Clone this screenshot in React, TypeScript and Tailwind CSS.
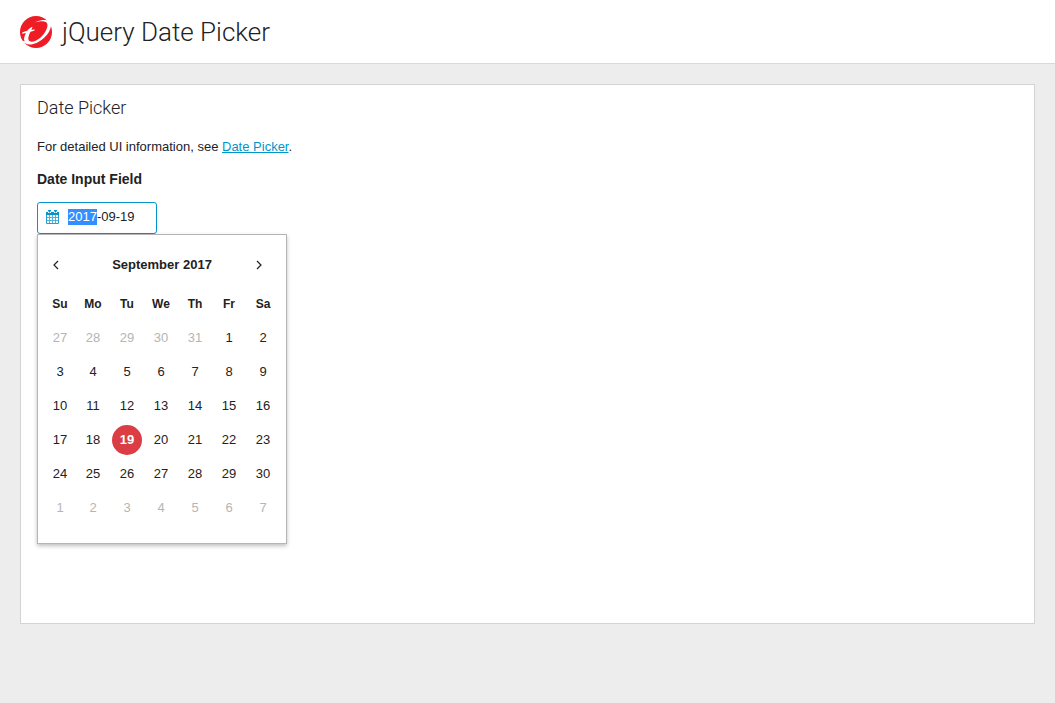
import { useEffect, useRef, useState } from "react";

const WEEKDAYS = ["Su", "Mo", "Tu", "We", "Th", "Fr", "Sa"];
const MONTHS = [
  "January", "February", "March", "April", "May", "June",
  "July", "August", "September", "October", "November", "December",
];

function pad(n: number) {
  return String(n).padStart(2, "0");
}

function toIso(d: Date) {
  return `${d.getFullYear()}-${pad(d.getMonth() + 1)}-${pad(d.getDate())}`;
}

function buildWeeks(year: number, month: number) {
  const offset = new Date(year, month, 1).getDay();
  return Array.from({ length: 6 }, (_, w) =>
    Array.from({ length: 7 }, (_, d) => new Date(year, month, 1 - offset + w * 7 + d)),
  );
}

function Logo() {
  return (
    <svg viewBox="0 0 32 32" className="size-8 shrink-0" aria-hidden="true">
      <circle cx="16" cy="16" r="16" fill="#ee1c25" />
      <path
        fill="#fff"
        d="M1 23.4C3 27 7 28.9 11.5 28.4C20.5 27.2 30.6 17.5 31 9.5C31 5.2 27 3.4 22.5 4C19.5 4.5 17 5.4 14.5 6.8C18.5 5.4 23.6 4.7 26.2 6.2C29.6 8.6 26 16.8 20 22C15.4 25.8 10.6 26.8 8.8 24.6C7.6 22.8 8.6 19.6 10.4 15.8L14.2 14.8L14.8 13.2L11.4 13.9L12.6 10.8C10.2 11.6 8.4 13.1 7.2 14.8L2.5 16.2L2 17.8L5.9 16.9C4.2 20.4 3.4 23 4.6 25.2C3.2 25 1.8 24.4 1 23.4Z"
      />
    </svg>
  );
}

function CalendarIcon() {
  return (
    <svg viewBox="0 0 13 14" className="h-3.5 w-[13px] shrink-0" aria-hidden="true">
      <path fill="#0096cc" d="M0 2h2v1h3V2h3v1h3V2h2v3H0z" />
      <path fill="#0096cc" d="M2 0h3v1.5h-1v1H3v-1H2zM8 0h3v1.5h-1v1H9v-1H8z" />
      <path fill="none" stroke="#2a9fce" strokeWidth="1" d="M.5 5v8.5h12V5" />
      <path fill="none" stroke="#4fb2d8" strokeWidth="1" d="M3.5 5v8M6.5 5v8M9.5 5v8M1 7.5h11M1 10.5h11" />
    </svg>
  );
}

function Chevron({ d }: { d: string }) {
  return (
    <svg viewBox="0 0 6 10" className="h-2.5 w-1.5" fill="none" stroke="#222" strokeWidth="1.2" aria-hidden="true">
      <path d={d} />
    </svg>
  );
}

export default function App() {
  const [selected, setSelected] = useState(new Date(2017, 8, 19));
  const [view, setView] = useState(new Date(2017, 8, 1));
  const [text, setText] = useState(toIso(selected));
  const input = useRef<HTMLInputElement>(null);

  useEffect(() => {
    input.current?.focus();
    input.current?.setSelectionRange(0, 4);
  }, []);

  const year = view.getFullYear();
  const month = view.getMonth();

  function pick(day: Date) {
    setSelected(day);
    setText(toIso(day));
    setView(new Date(day.getFullYear(), day.getMonth(), 1));
  }

  return (
    <div className="min-h-screen bg-[#ededed] font-['Liberation_Sans',Arial,sans-serif] text-[13px] leading-5 text-[#222]">
      <header className="flex h-16 items-center gap-2.5 border-b border-[#d9d9d9] bg-white px-5">
        <Logo />
        <h1 className="font-['Roboto',sans-serif] text-[26px] leading-8 font-light">jQuery Date Picker</h1>
      </header>

      <main className="p-5">
        <section className="min-h-[540px] border border-[#d3d3d3] bg-white px-4 py-3">
          <h2 className="font-['Roboto',sans-serif] text-lg leading-[22px] font-light">Date Picker</h2>
          <p className="mt-[18px]">
            For detailed UI information, see{" "}
            <a href="#date-picker" className="text-[#0096cc] underline">Date Picker</a>.
          </p>
          <label htmlFor="date" className="mt-3 block text-sm leading-5 font-bold">Date Input Field</label>

          <div className="relative mt-[13px] w-[120px]">
            <div className="flex h-8 items-center gap-[9px] rounded-[3px] border border-[#0096cc] bg-white px-2 pb-0.5">
              <CalendarIcon />
              <input
                id="date"
                ref={input}
                type="text"
                value={text}
                onChange={(e) => setText(e.target.value)}
                className="h-4 w-full min-w-0 bg-transparent text-[13px] leading-4 outline-none selection:bg-[#338fff] selection:text-white"
              />
            </div>

            <div className="absolute top-full left-0 w-[250px] border border-[#b5b5b5] bg-white px-1.5 pt-2 pb-[18px] shadow-[0_2px_4px_rgba(0,0,0,0.25)]">
              <div className="flex h-11 items-center">
                <button
                  type="button"
                  aria-label="Previous month"
                  className="flex h-6 w-10 items-center pl-[9px]"
                  onClick={() => setView(new Date(year, month - 1, 1))}
                >
                  <Chevron d="M5 1 1 5l4 4" />
                </button>
                <span className="flex-1 text-center font-bold">{MONTHS[month]} {year}</span>
                <button
                  type="button"
                  aria-label="Next month"
                  className="flex h-6 w-10 items-center justify-end pr-[18px]"
                  onClick={() => setView(new Date(year, month + 1, 1))}
                >
                  <Chevron d="m1 1 4 4-4 4" />
                </button>
              </div>
              <table className="w-full table-fixed border-collapse text-center">
                <thead>
                  <tr className="h-[34px] text-xs">
                    {WEEKDAYS.map((d) => (
                      <th key={d} scope="col" className="p-0 font-bold not-first:w-[34px]">{d}</th>
                    ))}
                  </tr>
                </thead>
                <tbody>
                  {buildWeeks(year, month).map((week) => (
                    <tr key={toIso(week[0])} className="h-[34px]">
                      {week.map((day) => {
                        const isSelected = toIso(day) === toIso(selected);
                        const tone = isSelected
                          ? "bg-[#db3d44] font-bold text-white"
                          : day.getMonth() === month
                            ? "text-[#222]"
                            : "text-[#b5b5b5]";
                        return (
                          <td key={toIso(day)} className="p-0">
                            <button
                              type="button"
                              onClick={() => pick(day)}
                              className={`mx-auto flex size-[30px] items-center justify-center rounded-full text-[13px] leading-4 ${tone}`}
                            >
                              {day.getDate()}
                            </button>
                          </td>
                        );
                      })}
                    </tr>
                  ))}
                </tbody>
              </table>
            </div>
          </div>
        </section>
      </main>
    </div>
  );
}
